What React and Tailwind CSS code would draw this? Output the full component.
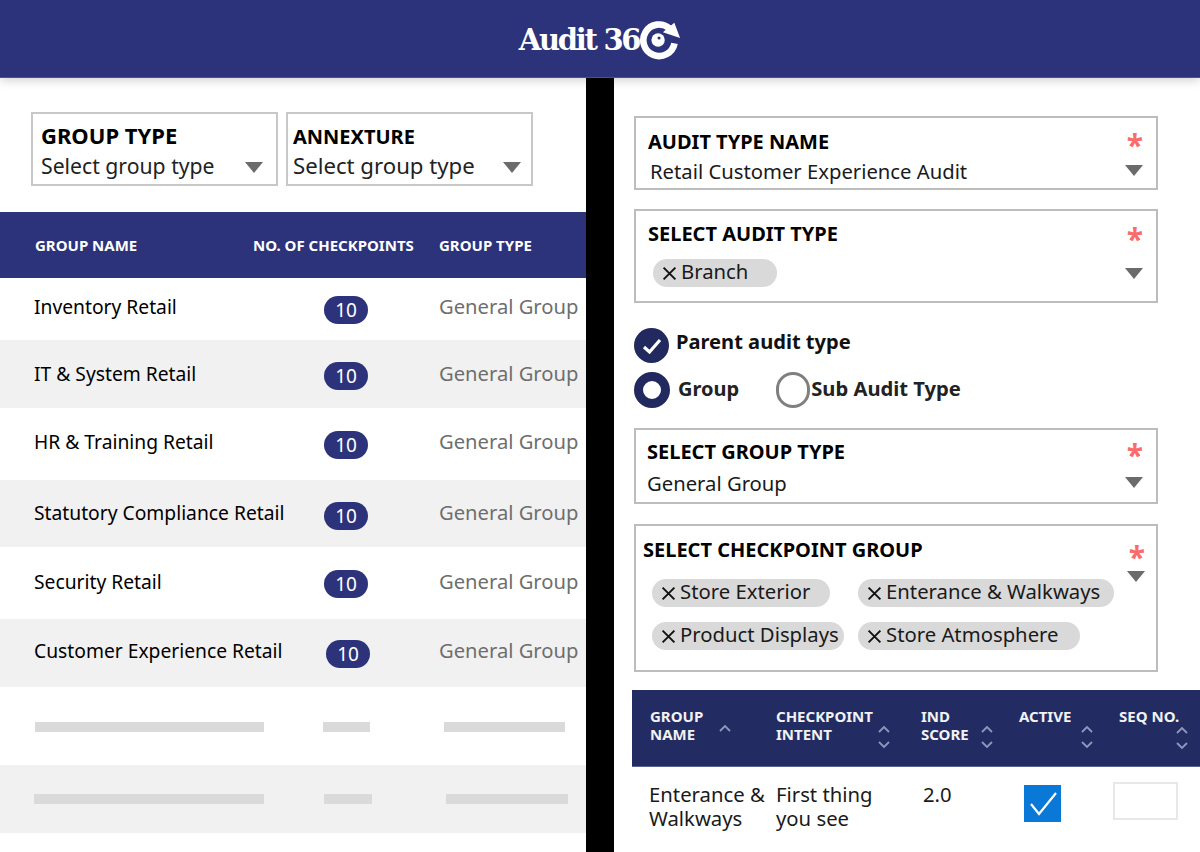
const font = { fontFamily: '"Noto Sans", sans-serif' };

const rows = [
  { name: "Inventory Retail", h: "h-[62px]", bg: "bg-white", pt: "pt-[17px]", badge: "left-[324px] top-[18px]" },
  { name: "IT & System Retail", h: "h-[68px]", bg: "bg-[#f1f1f1]", pt: "pt-[22px]", badge: "left-[324px] top-[22px]" },
  { name: "HR & Training Retail", h: "h-[72px]", bg: "bg-white", pt: "pt-[22px]", badge: "left-[324px] top-[23px]" },
  { name: "Statutory Compliance Retail", h: "h-[67px]", bg: "bg-[#f1f1f1]", pt: "pt-[21px]", badge: "left-[324px] top-[22px]" },
  { name: "Security Retail", h: "h-[72px]", bg: "bg-white", pt: "pt-[23px]", badge: "left-[324px] top-[23px]" },
  { name: "Customer Experience Retail", h: "h-[68px]", bg: "bg-[#f1f1f1]", pt: "pt-[20px]", badge: "left-[326px] top-[21px]" },
];

const Caret = ({ className = "" }) => (
  <span className={`block w-0 h-0 border-l-[9px] border-r-[9px] border-t-[11px] border-l-transparent border-r-transparent border-t-[#6b6b6b] ${className}`} />
);

const Star = ({ className = "" }) => (
  <span className={`absolute text-[#fb6b6b] font-bold text-[30px] leading-none ${className}`}>*</span>
);

const Chip = ({ label, width }) => (
  <span className={`flex items-center h-[28px] rounded-full bg-[#d9d9d9] pl-[9px] pb-[3px] text-[20.3px] whitespace-nowrap text-[#1a1a1a] ${width}`}>
    <svg width="15" height="15" viewBox="0 0 14 14" className="mr-[4px] mt-[3px] shrink-0">
      <path d="M1.5 1.5 L12.5 12.5 M12.5 1.5 L1.5 12.5" stroke="#111" strokeWidth="1.8" />
    </svg>
    {label}
  </span>
);

const Sort = ({ up = true, down = true, className = "" }) => (
  <svg width="16" height="26" viewBox="0 0 16 26" className={`shrink-0 ${className}`} fill="none" stroke="#8f97bd" strokeWidth="1.8">
    {up && <path d="M3 8 L8 3 L13 8" />}
    {down && <path d="M3 18 L8 23 L13 18" />}
  </svg>
);

const Logo = () => (
  <div className="flex items-center h-[78px] justify-center">
    <span
      className="text-white font-bold text-[29px] leading-none tracking-[-2.3px] mt-[2px]"
      style={{ fontFamily: '"DejaVu Serif", serif' }}
    >
      Audit 36
    </span>
    <svg width="42" height="42" viewBox="0 0 44 44" className="-mt-[1px]">
      <path d="M32 11 A16.5 16.5 0 1 0 37.2 26.5" fill="none" stroke="#fff" strokeWidth="7" />
      <path d="M37 5 L43 21 L25 15 Z" fill="#fff" />
      <circle cx="20" cy="23" r="7" fill="#fff" />
      <circle cx="21" cy="21" r="1.6" fill="#2c337a" />
    </svg>
  </div>
);

const Field = ({ className, title, children }) => (
  <div className={`relative border-2 border-[#bdbdbd] bg-white ${className}`}>
    <div className="font-bold text-[20px] leading-[28px] text-black">{title}</div>
    {children}
  </div>
);

export default function App() {
  return (
    <div className="w-[1200px] h-[852px] overflow-hidden bg-white" style={font}>
      <header className="relative z-10 h-[78px] bg-[#2c337a] border-b border-[#4a5196] shadow-[0_2px_10px_rgba(0,0,0,0.2)]">
        <Logo />
      </header>

      <div className="flex h-[774px]">
        {/* left list */}
        <div className="w-[586px] shrink-0 bg-white rounded-bl-[10px]">
          <div className="flex gap-[8px] pl-[31px] pt-[34px] h-[134px]">
            <div className="relative w-[247px] h-[74px] border-2 border-[#c8c8c8] pl-[8px] pt-[7px]">
              <div className="font-bold text-[22px] leading-[28px] text-black">GROUP TYPE</div>
              <div className="text-[21.2px] leading-[30px] mt-[2px] text-[#222]">Select group type</div>
              <Caret className="absolute right-[13px] top-[48px]" />
            </div>
            <div className="relative w-[247px] h-[74px] border-2 border-[#c8c8c8] pl-[5px] pt-[9px]">
              <div className="font-bold text-[20px] leading-[28px] text-black">ANNEXTURE</div>
              <div className="text-[22.2px] leading-[30px] text-[#222]">Select group type</div>
              <Caret className="absolute right-[10px] top-[48px]" />
            </div>
          </div>

          <div className="flex items-center h-[66px] bg-[#2c337a] text-white font-bold text-[15px] pl-[35px]">
            <span className="w-[218px]">GROUP NAME</span>
            <span className="w-[186px] whitespace-nowrap">NO. OF CHECKPOINTS</span>
            <span>GROUP TYPE</span>
          </div>

          {rows.map((r) => (
            <div key={r.name} className={`relative flex ${r.h} ${r.bg} ${r.pt} pl-[34px]`}>
              <span className="text-[19.25px] leading-[24px] text-black whitespace-nowrap">{r.name}</span>
              <span className={`absolute ${r.badge} flex items-center justify-center w-[44px] h-[28px] rounded-full bg-[#2c337a] text-white text-[19px]`}>
                10
              </span>
              <span className="absolute left-[439px] -mt-[1px] text-[20.2px] leading-[24px] text-[#6e6e6e] whitespace-nowrap">
                General Group
              </span>
            </div>
          ))}

          <div className="h-[78px] bg-white flex items-center pl-[35px] pt-[2px]">
            <span className="w-[229px] h-[10px] bg-[#dadada]" />
            <span className="ml-[59px] w-[47px] h-[10px] bg-[#dadada]" />
            <span className="ml-[74px] w-[121px] h-[10px] bg-[#dadada]" />
          </div>
          <div className="h-[68px] bg-[#f1f1f1] flex items-center pl-[34px]">
            <span className="w-[230px] h-[10px] bg-[#dadada]" />
            <span className="ml-[60px] w-[48px] h-[10px] bg-[#dadada]" />
            <span className="ml-[74px] w-[122px] h-[10px] bg-[#dadada]" />
          </div>
        </div>

        {/* divider */}
        <div className="w-[28px] shrink-0 bg-black" />

        {/* right form */}
        <div className="flex-1 min-w-0 pt-[38px]">
          <div className="pl-[20px] w-[544px]">
            <Field className="h-[74px] pl-[12px] pt-[10px]" title="AUDIT TYPE NAME">
              <div className="pl-[2px] mt-[1px] text-[20.25px] leading-[28px] text-[#1a1a1a]">Retail Customer Experience Audit</div>
              <Star className="right-[13px] top-[12px]" />
              <Caret className="absolute right-[13px] top-[47px]" />
            </Field>

            <Field className="h-[94px] mt-[19px] pl-[12px] pt-[9px]" title="SELECT AUDIT TYPE">
              <div className="pl-[5px] mt-[11px]">
                <Chip label="Branch" width="w-[124px]" />
              </div>
              <Star className="right-[13px] top-[13px]" />
              <Caret className="absolute right-[13px] top-[57px]" />
            </Field>

            <div className="flex mt-[25px] h-[35px]">
              <span className="flex items-center justify-center w-[35px] h-[35px] rounded-full bg-[#22295f]">
                <svg width="20" height="16" viewBox="0 0 20 16" fill="none" stroke="#fff" strokeWidth="3.2">
                  <path d="M2 9 L7.5 14 L18 2" />
                </svg>
              </span>
              <span className="ml-[7px] font-bold text-[20.1px] leading-[28px] text-[#111]">Parent audit type</span>
            </div>

            <div className="flex items-center mt-[9px] h-[36px]">
              <span className="w-[36px] h-[36px] rounded-full border-[9px] border-[#22295f] bg-white" />
              <span className="ml-[8px] -mt-[2px] font-bold text-[20px] text-[#222]">Group</span>
              <span className="ml-[37px] w-[34px] h-[36px] rounded-full border-[3px] border-[#7f7f7f] bg-white" />
              <span className="ml-[1px] -mt-[3px] font-bold text-[20.2px] text-[#222]">Sub Audit Type</span>
            </div>

            <Field className="h-[76px] mt-[20px] pl-[11px] pt-[8px]" title="SELECT GROUP TYPE">
              <div className="mt-[3px] text-[20.25px] leading-[28px] text-[#1a1a1a]">General Group</div>
              <Star className="right-[13px] top-[10px]" />
              <Caret className="absolute right-[13px] top-[47px]" />
            </Field>

            <Field className="h-[148px] mt-[20px] pl-[7px] pt-[10px]" title="SELECT CHECKPOINT GROUP">
              <div className="flex gap-x-[28px] pl-[9px] mt-[15px]">
                <Chip label="Store Exterior" width="w-[178px]" />
                <Chip label="Enterance & Walkways" width="w-[256px]" />
              </div>
              <div className="flex gap-x-[14px] pl-[9px] mt-[15px]">
                <Chip label="Product Displays" width="w-[192px]" />
                <Chip label="Store Atmosphere" width="w-[222px]" />
              </div>
              <Star className="right-[11px] top-[16px]" />
              <Caret className="absolute right-[11px] top-[45px]" />
            </Field>
          </div>

          <div className="ml-[18px] mt-[18px] h-[77px] bg-[#222c63] border-b border-[#5a628f] flex pt-[17px] pl-[18px] text-[#f2f2f2] font-bold text-[15px] leading-[18px]">
            <div className="w-[126px] flex">
              <span>GROUP<br />NAME</span>
              <Sort down={false} className="ml-[14px] mt-[16px]" />
            </div>
            <div className="w-[145px] flex">
              <span>CHECKPOINT<br />INTENT</span>
              <Sort className="ml-[3px] mt-[17px]" />
            </div>
            <div className="w-[98px] flex">
              <span>IND<br />SCORE</span>
              <Sort className="ml-[10px] mt-[17px]" />
            </div>
            <div className="w-[100px] flex">
              <span className="w-[60px]">ACTIVE</span>
              <Sort className="mt-[17px]" />
            </div>
            <div className="flex">
              <span className="whitespace-nowrap">SEQ NO.</span>
              <Sort className="-ml-[5px] mt-[18px]" />
            </div>
          </div>

          <div className="flex ml-[35px] pt-[15px] text-[20.3px] leading-[24px] text-[#1a1a1a]">
            <div className="w-[127px]">Enterance &amp;<br />Walkways</div>
            <div className="w-[147px]">First thing<br />you see</div>
            <div className="w-[101px]">2.0</div>
            <div className="w-[89px] pt-[3px]">
              <span className="flex items-center justify-center w-[37px] h-[37px] bg-[#0a78d7]">
                <svg width="30" height="28" viewBox="0 0 30 28" fill="none" stroke="#fff" strokeWidth="2.2">
                  <path d="M3 14 L11 24 L28 3" />
                </svg>
              </span>
            </div>
            <div className="w-[65px] h-[38px] border-2 border-[#e8e8e8] bg-white" />
          </div>
        </div>
      </div>
    </div>
  );
}
